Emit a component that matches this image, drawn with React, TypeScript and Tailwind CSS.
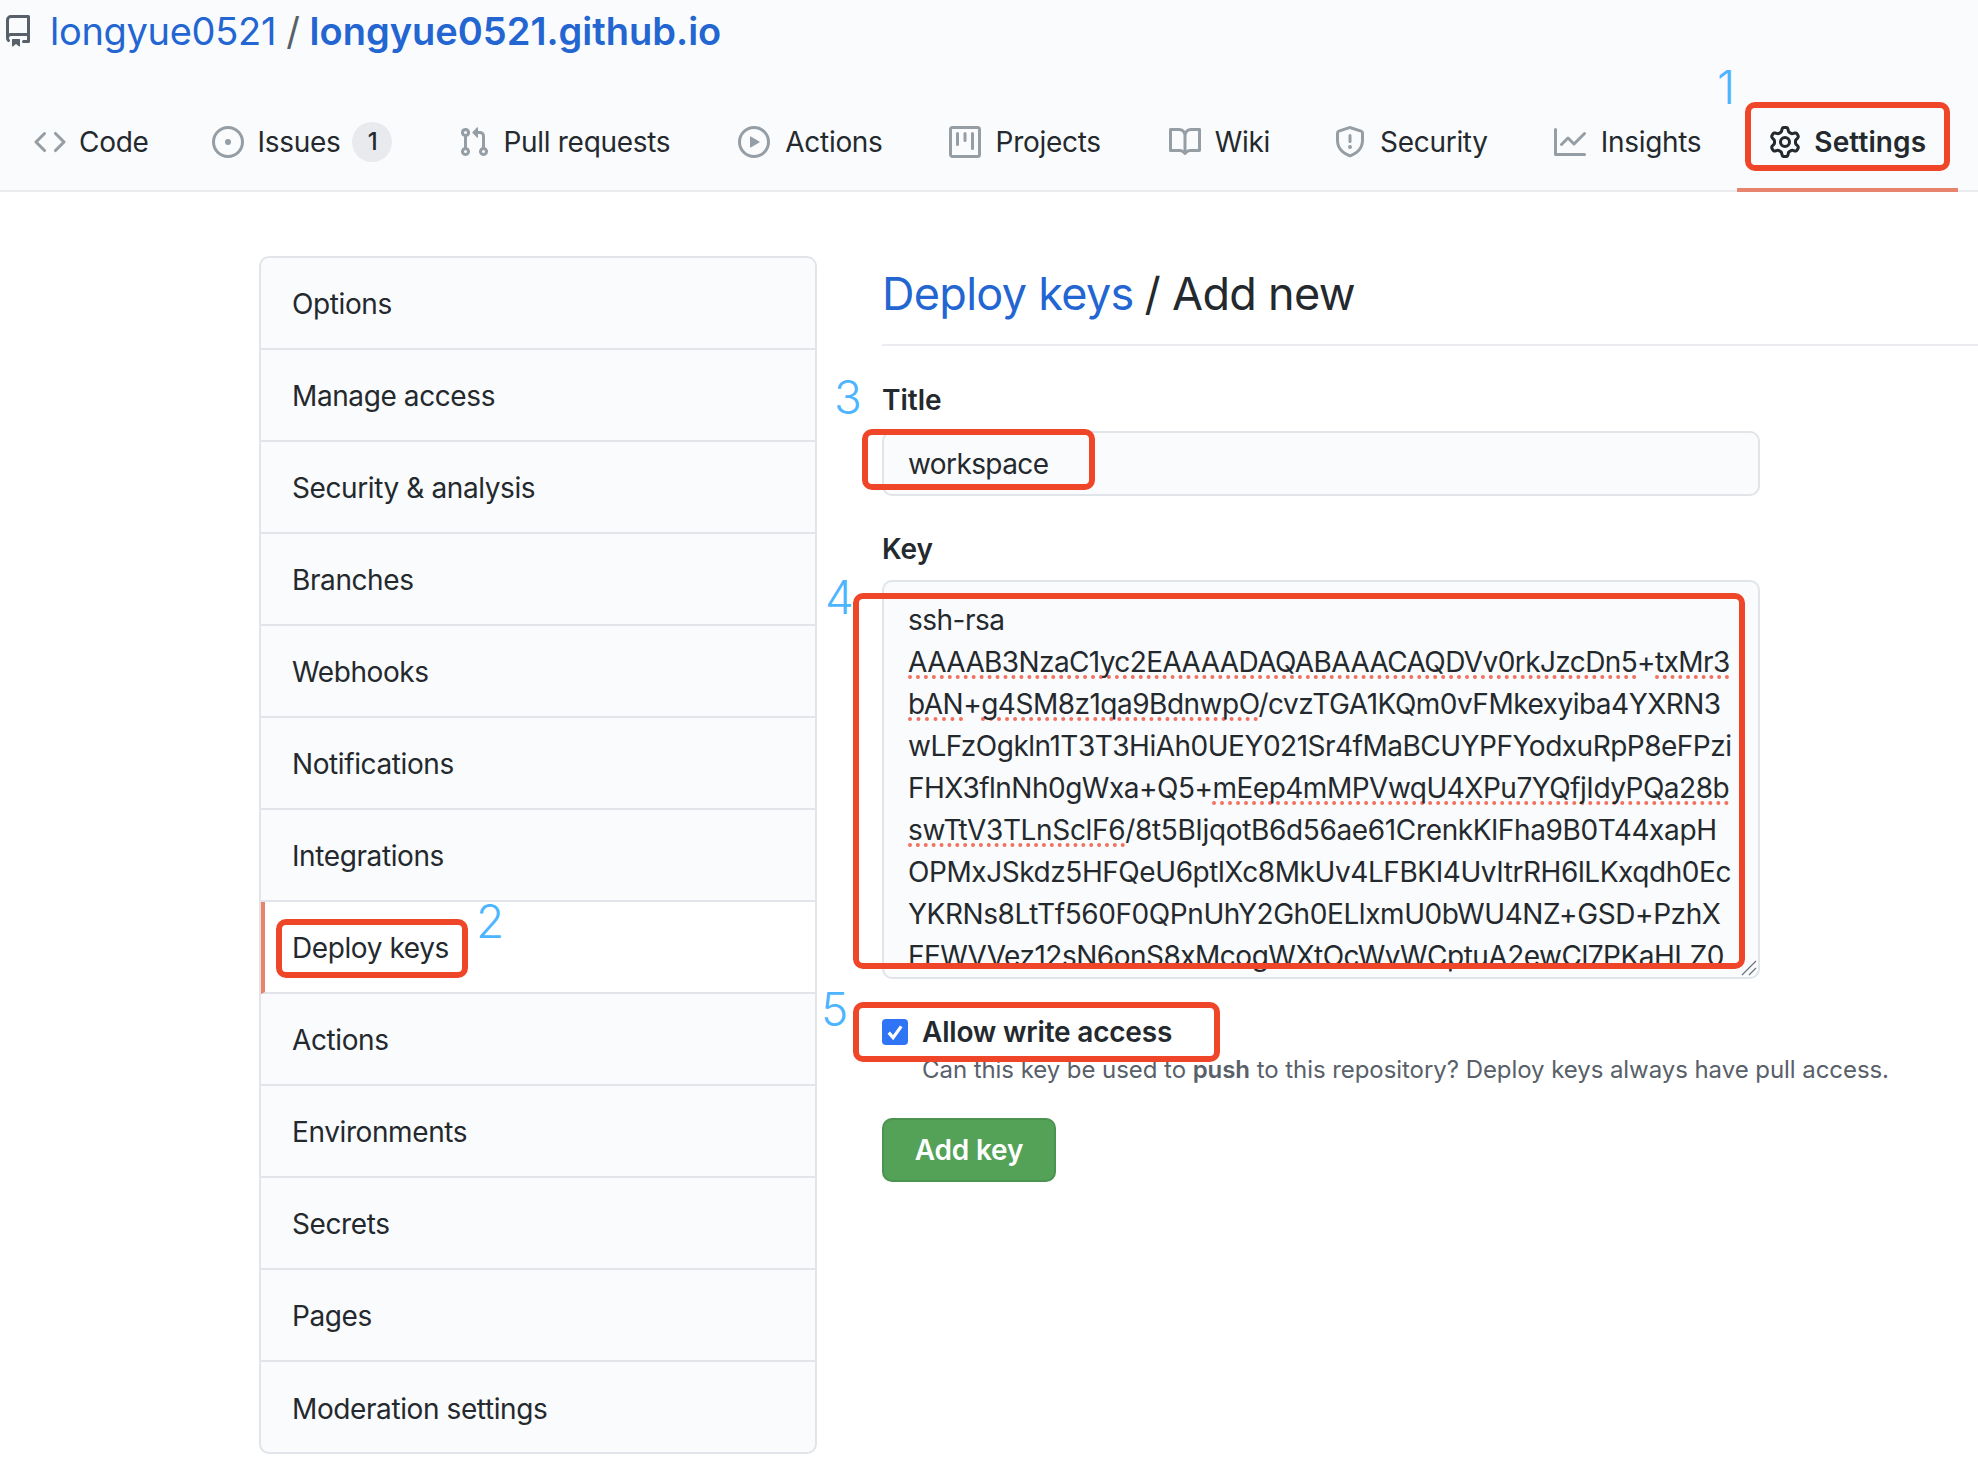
const icons = {
  repo: "M2 2.5A2.5 2.5 0 014.5 0h8.75a.75.75 0 01.75.75v12.5a.75.75 0 01-.75.75h-2.5a.75.75 0 110-1.5h1.75v-2h-8a1 1 0 00-.714 1.7.75.75 0 01-1.072 1.05A2.495 2.495 0 012 11.5v-9zm10.5-1V9h-8c-.356 0-.694.074-1 .208V2.5a1 1 0 011-1h8zM5 12.25v3.25a.25.25 0 00.4.2l1.45-1.087a.25.25 0 01.3 0L8.6 15.7a.25.25 0 00.4-.2v-3.25a.25.25 0 00-.25-.25h-3.5a.25.25 0 00-.25.25z",
  code: "M4.72 3.22a.75.75 0 011.06 1.06L2.06 8l3.72 3.72a.75.75 0 11-1.06 1.06L.47 8.53a.75.75 0 010-1.06l4.25-4.25zm6.56 0a.75.75 0 10-1.06 1.06L13.94 8l-3.72 3.72a.75.75 0 101.06 1.06l4.25-4.25a.75.75 0 000-1.06l-4.25-4.25z",
  issue: "M8 9.5a1.5 1.5 0 100-3 1.5 1.5 0 000 3zM8 0a8 8 0 100 16A8 8 0 008 0zM1.5 8a6.5 6.5 0 1113 0 6.5 6.5 0 01-13 0z",
  pull: "M7.177 3.073L9.573.677A.25.25 0 0110 .854v4.792a.25.25 0 01-.427.177L7.177 3.427a.25.25 0 010-.354zM3.75 2.5a.75.75 0 100 1.5.75.75 0 000-1.5zm-2.25.75a2.25 2.25 0 113 2.122v5.256a2.251 2.251 0 11-1.5 0V5.372A2.25 2.25 0 011.5 3.25zM11 2.5h-1V4h1a1 1 0 011 1v5.628a2.251 2.251 0 101.5 0V5A2.5 2.5 0 0011 2.5zm1 10.25a.75.75 0 111.5 0 .75.75 0 01-1.5 0zM3.75 12a.75.75 0 100 1.5.75.75 0 000-1.5z",
  play: "M1.5 8a6.5 6.5 0 1113 0 6.5 6.5 0 01-13 0zM8 0a8 8 0 100 16A8 8 0 008 0zM6.379 5.227A.25.25 0 006 5.442v5.117a.25.25 0 00.379.214l4.264-2.559a.25.25 0 000-.428L6.379 5.227z",
  project: "M1.75 0A1.75 1.75 0 000 1.75v12.5C0 15.216.784 16 1.75 16h12.5A1.75 1.75 0 0016 14.25V1.75A1.75 1.75 0 0014.25 0H1.75zM1.5 1.75a.25.25 0 01.25-.25h12.5a.25.25 0 01.25.25v12.5a.25.25 0 01-.25.25H1.75a.25.25 0 01-.25-.25V1.75zM11.75 3a.75.75 0 00-.75.75v7.5a.75.75 0 001.5 0v-7.5a.75.75 0 00-.75-.75zm-8.25.75a.75.75 0 011.5 0v5.5a.75.75 0 01-1.5 0v-5.5zM8 3a.75.75 0 00-.75.75v3.5a.75.75 0 001.5 0v-3.5A.75.75 0 008 3z",
  book: "M0 1.75A.75.75 0 01.75 1h4.253c1.227 0 2.317.59 3 1.501A3.744 3.744 0 0111.006 1h4.245a.75.75 0 01.75.75v10.5a.75.75 0 01-.75.75h-4.507a2.25 2.25 0 00-1.591.659l-.622.621a.75.75 0 01-1.06 0l-.622-.621A2.25 2.25 0 005.258 13H.75a.75.75 0 01-.75-.75V1.75zm8.755 3a2.25 2.25 0 012.25-2.25H14.5v9h-3.757c-.71 0-1.4.201-1.992.572l.004-7.322zm-1.504 7.324l.004-5.073-.002-2.253A2.25 2.25 0 005.003 2.5H1.5v9h3.757a3.75 3.75 0 011.994.574z",
  shield: "M7.467.133a1.75 1.75 0 011.066 0l5.25 1.68A1.75 1.75 0 0115 3.48V7c0 1.566-.32 3.182-1.303 4.682-.983 1.498-2.585 2.813-5.032 3.855a1.7 1.7 0 01-1.33 0c-2.447-1.042-4.049-2.357-5.032-3.855C1.32 10.182 1 8.566 1 7V3.48a1.75 1.75 0 011.217-1.667l5.25-1.68zm.61 1.429a.25.25 0 00-.153 0l-5.25 1.68a.25.25 0 00-.174.238V7c0 1.358.275 2.666 1.057 3.86.784 1.194 2.121 2.34 4.366 3.297a.2.2 0 00.154 0c2.245-.956 3.582-2.104 4.366-3.298C13.225 9.666 13.5 8.36 13.5 7V3.48a.25.25 0 00-.174-.237l-5.25-1.68zM9 10.5a1 1 0 11-2 0 1 1 0 012 0zm-.25-5.75a.75.75 0 10-1.5 0v3a.75.75 0 001.5 0v-3z",
  graph: "M1.5 1.75a.75.75 0 00-1.5 0v12.5c0 .414.336.75.75.75h14.5a.75.75 0 000-1.5H1.5V1.75zm14.28 2.53a.75.75 0 00-1.06-1.06L10 7.94 7.53 5.47a.75.75 0 00-1.06 0L3.22 8.72a.75.75 0 001.06 1.06L7 7.06l2.47 2.47a.75.75 0 001.06 0l5.25-5.25z",
  gear: "M7.429 1.525a6.593 6.593 0 011.142 0c.036.003.108.036.137.146l.289 1.105c.147.56.55.967.997 1.189.174.086.341.183.501.29.417.278.97.423 1.53.27l1.102-.303c.11-.03.175.016.195.046.219.31.41.641.573.989.014.031.022.11-.059.19l-.815.806c-.411.406-.562.957-.53 1.456a4.588 4.588 0 010 .582c-.032.499.119 1.05.53 1.456l.815.806c.08.08.073.159.059.19a6.494 6.494 0 01-.573.99c-.02.029-.086.074-.195.045l-1.103-.303c-.559-.153-1.112-.008-1.529.27-.16.107-.327.204-.5.29-.449.222-.851.628-.998 1.189l-.289 1.105c-.029.11-.101.143-.137.146a6.613 6.613 0 01-1.142 0c-.036-.003-.108-.037-.137-.146l-.289-1.105c-.147-.56-.55-.967-.997-1.189a4.502 4.502 0 01-.501-.29c-.417-.278-.97-.423-1.53-.27l-1.102.303c-.11.03-.175-.016-.195-.046a6.492 6.492 0 01-.573-.989c-.014-.031-.022-.11.059-.19l.815-.806c.411-.406.562-.957.53-1.456a4.587 4.587 0 010-.582c.032-.499-.119-1.05-.53-1.456l-.815-.806c-.08-.08-.073-.159-.059-.19a6.44 6.44 0 01.573-.99c.02-.029.086-.075.195-.045l1.103.303c.559.153 1.112.008 1.529-.27.16-.107.327-.204.5-.29.449-.222.851-.628.998-1.189l.289-1.105c.029-.11.101-.143.137-.146zM8 0c-.236 0-.47.01-.701.03-.743.065-1.29.615-1.458 1.261l-.29 1.106c-.017.066-.078.158-.211.224a5.994 5.994 0 00-.668.386c-.123.082-.233.09-.3.071L3.27 2.776c-.644-.177-1.392.02-1.82.63a7.977 7.977 0 00-.704 1.217c-.315.675-.111 1.422.363 1.891l.815.806c.05.048.098.147.088.294a6.084 6.084 0 000 .772c.01.147-.038.246-.088.294l-.815.806c-.474.469-.678 1.216-.363 1.891.2.428.436.835.704 1.218.428.609 1.176.806 1.82.63l1.103-.303c.066-.019.176-.011.299.071.213.143.436.272.668.386.133.066.194.158.212.224l.289 1.106c.169.646.715 1.196 1.458 1.26a8.094 8.094 0 001.402 0c.743-.064 1.29-.614 1.458-1.26l.29-1.106c.017-.066.078-.158.211-.224a5.98 5.98 0 00.668-.386c.123-.082.233-.09.3-.071l1.102.302c.644.177 1.392-.02 1.82-.63.268-.382.505-.789.704-1.217.315-.675.111-1.422-.364-1.891l-.814-.806c-.05-.048-.098-.147-.088-.294a6.1 6.1 0 000-.772c-.01-.147.039-.246.088-.294l.814-.806c.475-.469.679-1.216.364-1.891a7.992 7.992 0 00-.704-1.218c-.428-.609-1.176-.806-1.82-.63l-1.103.303c-.066.019-.176.011-.299-.071a5.991 5.991 0 00-.668-.386c-.133-.066-.194-.158-.212-.224L10.16 1.29C9.99.645 9.444.095 8.701.031A8.094 8.094 0 008 0zm1.5 8a1.5 1.5 0 11-3 0 1.5 1.5 0 013 0zM11 8a3 3 0 11-6 0 3 3 0 016 0z",
}

const Octicon = ({ d, className }: { d: string; className: string }) => {
  return (
    <svg viewBox="0 0 16 16" fill="currentColor" className={className}>
      <path fillRule="evenodd" d={d} />
    </svg>
  )
}

const tabs = [
  { name: "Code", icon: icons.code, pad: "pl-[34px] pr-[30px] gap-[13px]" },
  { name: "Issues", icon: icons.issue, badge: "1", pad: "px-[33px] gap-[14px]" },
  { name: "Pull requests", icon: icons.pull, pad: "pl-[33px] pr-[35px] gap-[13px]" },
  { name: "Actions", icon: icons.play, pad: "px-[33px] gap-[15px]" },
  { name: "Projects", icon: icons.project, pad: "pl-[33px] pr-[35px] gap-[15px]" },
  { name: "Wiki", icon: icons.book, pad: "pl-[33px] pr-[31px] gap-[14px]" },
  { name: "Security", icon: icons.shield, pad: "px-[33px] gap-[14px]" },
  { name: "Insights", icon: icons.graph, pad: "pl-[33px] pr-[36px] gap-[15px]" },
]

const menu = [
  "Options",
  "Manage access",
  "Security & analysis",
  "Branches",
  "Webhooks",
  "Notifications",
  "Integrations",
  "Deploy keys",
  "Actions",
  "Environments",
  "Secrets",
  "Pages",
  "Moderation settings",
]

const Header = () => {
  return (
    <div className="h-[192px] bg-[#fafbfc] border-b-2 border-[#eaecef] flex flex-col">
      <div className="h-[62px] pl-[2px] flex items-center text-[38px] leading-[60px] tracking-[-0.3px] text-[#2366d1]">
        <Octicon d={icons.repo} className="w-8 h-8 text-[#586069] mr-[16px]" />
        <span>longyue0521</span>
        <span className="text-[#586069] mx-[10px]">/</span>
        <span className="font-semibold tracking-normal">longyue0521.github.io</span>
      </div>
      <div className="h-[128px] flex items-end">
        {tabs.map((tab) => (
          <div key={tab.name} className={`h-[100px] pt-[4px] flex items-center text-[28px] tracking-[-0.3px] text-[#24292e] whitespace-nowrap ${tab.pad}`}>
            <Octicon d={tab.icon} className="w-8 h-8 text-[#959da5]" />
            <span>{tab.name}</span>
            {tab.badge && (
              <span className="-ml-[2px] w-[40px] h-[40px] rounded-full bg-[#e8eaed] flex items-center justify-center text-[24px] font-medium">{tab.badge}</span>
            )}
          </div>
        ))}
        <div className="h-[102px] -mb-[2px] pt-[6px] px-[32px] flex items-center gap-[13px] text-[28px] tracking-[0.1px] font-semibold text-[#24292e] whitespace-nowrap border-b-4 border-[#e8836e]">
          <Octicon d={icons.gear} className="w-8 h-8 text-[#24292e]" />
          <span>Settings</span>
        </div>
      </div>
    </div>
  )
}

const Sidebar = () => {
  return (
    <div className="w-[558px] h-[1198px] shrink-0 border-2 border-[#e1e4e8] rounded-[10px] bg-[#fafbfc] overflow-hidden">
      {menu.map((item, index) => (
        <div
          key={item}
          className={`h-[92px] pt-[2px] flex items-center text-[28px] tracking-[-0.4px] text-[#24292e] ${index === 12 ? "" : "border-b-2 border-[#e1e4e8]"} ${item === "Deploy keys" ? "bg-white border-l-4 border-l-[#e8836e] pl-[27px]" : "pl-[31px]"}`}
        >
          {item}
        </div>
      ))}
    </div>
  )
}

const Typo = ({ children }: { children: React.ReactNode }) => {
  return <span className="underline decoration-dotted decoration-[#f2705f] decoration-[4px] underline-offset-[3px] [text-decoration-skip-ink:none]">{children}</span>
}

const KeyBox = () => {
  return (
    <div className="relative h-[399px] border-2 border-[#e1e4e8] rounded-[10px] bg-[#fafbfc] pl-[24px] pt-[17px] overflow-hidden text-[28px] tracking-[-0.5px] leading-[42px] text-[#24292e] whitespace-nowrap">
      <div>ssh-rsa</div>
      <div className="tracking-[-0.6px]"><Typo>AAAAB3NzaC1yc2EAAAADAQABAAACAQDVv0rkJzcDn5</Typo>+<Typo>txMr3</Typo></div>
      <div><Typo>bAN</Typo>+<Typo>g4SM8z1qa9BdnwpO</Typo>/cvzTGA1KQm0vFMkexyiba4YXRN3</div>
      <div>wLFzOgkln1T3T3HiAh0UEY021Sr4fMaBCUYPFYodxuRpP8eFPzi</div>
      <div>FHX3flnNh0gWxa+Q5+<Typo>mEep4mMPVwqU4XPu7YQfjIdyPQa28b</Typo></div>
      <div className="tracking-[-0.35px]"><Typo>swTtV3TLnSclF6</Typo>/8t5BIjqotB6d56ae61CrenkKlFha9B0T44xapH</div>
      <div className="tracking-[-0.43px]">OPMxJSkdz5HFQeU6ptlXc8MkUv4LFBKI4UvItrRH6lLKxqdh0Ec</div>
      <div className="tracking-[-0.42px]">YKRNs8LtTf560F0QPnUhY2Gh0ELlxmU0bWU4NZ+GSD+PzhX</div>
      <div>FEWVVez12sN6onS8xMcogWXtOcWvWCptuA2ewCl7PKaHLZ0</div>
      <svg viewBox="0 0 16 16" className="absolute right-[1px] bottom-[1px] w-4 h-4 text-[#6a737d]" fill="none" stroke="currentColor" strokeWidth="1.2">
        <path d="M1 15L15 1M8 15L15 8" />
      </svg>
    </div>
  )
}

const Form = () => {
  return (
    <div className="flex-1 min-w-0">
      <div className="h-[90px] flex items-center border-b-2 border-[#eaecef] text-[45px] tracking-[-0.7px] text-[#24292e] pb-[12px] whitespace-nowrap">
        <span className="text-[#2366d1]">Deploy keys</span>
        <span className="ml-[11px]">/ Add new</span>
      </div>
      <div className="w-[878px]">
        <div className="mt-[36px] h-[36px] leading-[36px] text-[28px] font-semibold text-[#24292e]">Title</div>
        <div className="mt-[13px] h-[65px] border-2 border-[#e1e4e8] rounded-[10px] bg-[#fafbfc] pl-[24px] flex items-center text-[28px] tracking-[-0.6px] text-[#24292e]">workspace</div>
        <div className="mt-[35px] h-[36px] leading-[36px] text-[28px] font-semibold text-[#24292e]">Key</div>
        <div className="mt-[13px]">
          <KeyBox />
        </div>
      </div>
      <div className="mt-[40px] h-[26px] flex items-center gap-[14px] text-[28px] tracking-[-0.2px] font-semibold text-[#24292e] whitespace-nowrap">
        <span className="w-[26px] h-[26px] rounded-[4px] bg-[#2f74f5] flex items-center justify-center">
          <svg viewBox="0 0 16 16" className="w-[20px] h-[20px]" fill="none" stroke="white" strokeWidth="2.6">
            <path d="M3 8.5L6.5 12.5L13 3.5" />
          </svg>
        </span>
        <span>Allow write access</span>
      </div>
      <div className="mt-[10px] ml-[40px] h-[30px] leading-[30px] text-[24px] tracking-[-0.06px] text-[#586069] whitespace-nowrap">
        Can this key be used to <span className="font-semibold">push</span> to this repository? Deploy keys always have pull access.
      </div>
      <div className="mt-[33px] w-[174px] h-[64px] rounded-[10px] bg-[#53a257] border-2 border-[#4a9350] flex items-center justify-center text-[28px] tracking-[-0.2px] font-semibold text-white">Add key</div>
    </div>
  )
}

const App = () => {
  return (
    <div className="relative w-[1978px] h-[1460px] overflow-hidden bg-white font-[family-name:Inter,sans-serif]">
      <Header />
      <div className="flex pl-[259px] pt-[64px] gap-[65px]">
        <Sidebar />
        <Form />
      </div>

      {/* annotations drawn over the screenshot */}
      <div className="absolute left-[1745px] top-[102px] w-[205px] h-[69px] border-[6px] border-[#ef4528] rounded-[10px]"></div>
      <div className="absolute left-[862px] top-[429px] w-[233px] h-[61px] border-[6px] border-[#ef4528] rounded-[10px]"></div>
      <div className="absolute left-[276px] top-[919px] w-[192px] h-[59px] border-[6px] border-[#ef4528] rounded-[10px]"></div>
      <div className="absolute left-[853px] top-[593px] w-[892px] h-[376px] border-[6px] border-[#ef4528] rounded-[10px]"></div>
      <div className="absolute left-[853px] top-[1002px] w-[367px] h-[60px] border-[6px] border-[#ef4528] rounded-[10px]"></div>

      <div className="absolute left-[1717px] top-[60px] text-[46px] leading-[54px] font-light text-[#4db5ff]">1</div>
      <div className="absolute left-[476px] top-[894px] text-[46px] leading-[54px] font-light text-[#4db5ff]">2</div>
      <div className="absolute left-[834px] top-[370px] text-[46px] leading-[54px] font-light text-[#4db5ff]">3</div>
      <div className="absolute left-[825px] top-[570px] text-[46px] leading-[54px] font-light text-[#4db5ff]">4</div>
      <div className="absolute left-[821px] top-[982px] text-[46px] leading-[54px] font-light text-[#4db5ff]">5</div>
    </div>
  )
}

export default App
